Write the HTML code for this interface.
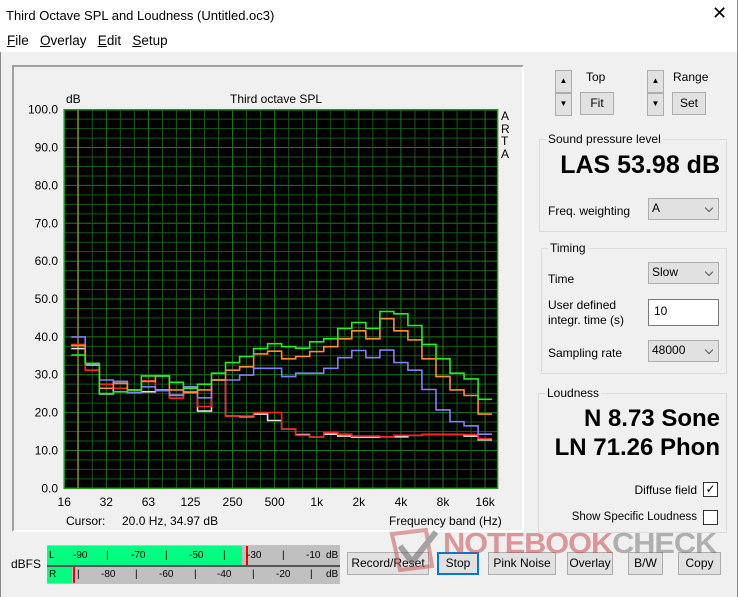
<!DOCTYPE html>
<html><head><meta charset="utf-8"><style>
*{margin:0;padding:0;box-sizing:border-box}
body{width:738px;height:597px;background:#f0f0f0;font-family:"Liberation Sans",Arial,sans-serif;font-size:12px;color:#000;position:relative;overflow:hidden}
.a{position:absolute;white-space:nowrap}
.btn{position:absolute;background:#e1e1e1;border:1px solid #adadad;text-align:center;font-size:12px}
.grp{position:absolute;border:1px solid #dcdcdc}
.grp>span{position:absolute;top:-8px;left:6px;background:#f0f0f0;padding:0 2px}
.cb{position:absolute;background:#e1e1e1;border:1px solid #adadad;padding:2px 0 0 3px;font-size:12px}
.cb:after{content:"";position:absolute;right:6px;top:6px;width:5px;height:5px;border-right:1px solid #555;border-bottom:1px solid #555;transform:rotate(45deg)}
</style></head><body>
<div class="a" style="left:0;top:0;width:738px;height:52px;background:#fff"></div>
<div class="a" style="left:6px;top:8px;font-size:13px">Third Octave SPL and Loudness (Untitled.oc3)</div>
<div class="a" style="left:712px;top:3px;font-size:18px;font-weight:300">✕</div>
<div class="a" style="left:7px;top:33px;font-size:13.5px"><u>F</u>ile&nbsp;&nbsp; <u>O</u>verlay&nbsp;&nbsp; <u>E</u>dit&nbsp;&nbsp; <u>S</u>etup</div>
<div class="a" style="left:0;top:52px;width:1px;height:545px;background:#888"></div>
<div class="a" style="left:737px;top:0;width:1px;height:597px;background:#888"></div>
<div class="a" style="left:12px;top:65px;width:512px;height:467px;border:2px solid #a0a0a0;border-right-color:#fff;border-bottom-color:#fff"></div>
<svg class="a" style="left:0;top:0" width="738" height="597" id="g"></svg>
<div class="a" style="left:66px;top:92px;font-size:12px">dB</div>
<div class="a" style="left:230px;top:92px;font-size:12px">Third octave SPL</div>
<div class="a" style="left:501px;top:110px;font-size:12px;line-height:12.5px;width:10px">A<br>R<br>T<br>A</div>
<div class="a" style="left:66px;top:514px">Cursor:&nbsp;&nbsp;&nbsp;&nbsp; 20.0 Hz, 34.97 dB</div>
<div class="a" style="left:389px;top:514px">Frequency band (Hz)</div>
<!-- right panel -->
<div class="btn" style="left:555px;top:70px;width:17px;height:23px;font-size:8px;line-height:20px">▲</div>
<div class="btn" style="left:555px;top:93px;width:17px;height:23px;font-size:8px;line-height:20px">▼</div>
<div class="a" style="left:586px;top:70px">Top</div>
<div class="btn" style="left:580px;top:92px;width:34px;height:23px;line-height:21px">Fit</div>
<div class="btn" style="left:647px;top:70px;width:17px;height:23px;font-size:8px;line-height:20px">▲</div>
<div class="btn" style="left:647px;top:93px;width:17px;height:23px;font-size:8px;line-height:20px">▼</div>
<div class="a" style="left:673px;top:70px">Range</div>
<div class="btn" style="left:672px;top:92px;width:34px;height:23px;line-height:21px">Set</div>
<div class="grp" style="left:539px;top:139px;width:188px;height:93px"><span>Sound pressure level</span></div>
<div class="a" style="left:540px;top:151px;width:180px;text-align:right;font-size:25px;font-weight:bold">LAS 53.98 dB</div>
<div class="a" style="left:548px;top:204px">Freq. weighting</div>
<div class="cb" style="left:648px;top:198px;width:71px;height:22px">A</div>
<div class="grp" style="left:541px;top:248px;width:186px;height:126px"><span>Timing</span></div>
<div class="a" style="left:548px;top:272px">Time</div>
<div class="cb" style="left:648px;top:262px;width:71px;height:22px">Slow</div>
<div class="a" style="left:548px;top:298px;line-height:15px">User defined<br>integr. time (s)</div>
<div class="a" style="left:648px;top:299px;width:71px;height:27px;background:#fff;border:1px solid #7a7a7a;padding:4px 0 0 5px">10</div>
<div class="a" style="left:548px;top:346px">Sampling rate</div>
<div class="cb" style="left:648px;top:340px;width:71px;height:22px">48000</div>
<div class="grp" style="left:538px;top:393px;width:189px;height:140px"><span>Loudness</span></div>
<div class="a" style="left:530px;top:404px;width:190px;text-align:right;font-size:24px;font-weight:bold;line-height:29px">N 8.73 Sone<br>LN 71.26 Phon</div>
<div class="a" style="left:600px;top:483px;width:97px;text-align:right">Diffuse field</div>
<div class="a" style="left:703px;top:482px;width:15px;height:15px;border:1px solid #333;background:#fff;font-size:12px;line-height:13px;text-align:center">✓</div>
<div class="a" style="left:560px;top:511px;width:137px;text-align:right;font-size:11.5px">Show Specific Loudness</div>
<div class="a" style="left:703px;top:510px;width:15px;height:15px;border:1px solid #333;background:#fff"></div>
<!-- meter -->
<div class="a" style="left:11px;top:557px">dBFS</div>
<div class="a" style="left:47px;top:545px;width:293px;height:39px;background:#c0c0c0"></div>
<div class="a" style="left:47px;top:546px;width:195px;height:19px;background:#00ff80"></div>
<div class="a" style="left:47px;top:567px;width:25px;height:16px;background:#00ff80"></div>
<div class="a" style="left:47px;top:565px;width:293px;height:2px;background:#555"></div>
<div class="a" style="left:246px;top:546px;width:2px;height:19px;background:#e00"></div>
<div class="a" style="left:73px;top:567px;width:2px;height:16px;background:#e00"></div>
<div class="a" style="left:49px;top:550px;font-size:10px;width:291px;height:14px">
<span class="a" style="left:0">L</span><span class="a" style="left:24px">-90</span><span class="a" style="left:57px">|</span><span class="a" style="left:82px">-70</span><span class="a" style="left:116px">|</span><span class="a" style="left:140px">-50</span><span class="a" style="left:174px">|</span><span class="a" style="left:198px">-30</span><span class="a" style="left:233px">|</span><span class="a" style="left:257px">-10</span><span class="a" style="left:277px">dB</span></div>
<div class="a" style="left:49px;top:569px;font-size:10px;width:291px;height:14px">
<span class="a" style="left:0">R</span><span class="a" style="left:28px">|</span><span class="a" style="left:52px">-80</span><span class="a" style="left:86px">|</span><span class="a" style="left:110px">-60</span><span class="a" style="left:145px">|</span><span class="a" style="left:168px">-40</span><span class="a" style="left:203px">|</span><span class="a" style="left:227px">-20</span><span class="a" style="left:261px">|</span><span class="a" style="left:277px">dB</span></div>
<div class="btn" style="left:347px;top:552px;width:82px;height:23px;line-height:21px">Record/Reset</div>
<div class="btn" style="left:437px;top:552px;width:42px;height:23px;line-height:19px;border:2px solid #0078d7">Stop</div>
<div class="btn" style="left:488px;top:552px;width:68px;height:23px;line-height:21px">Pink Noise</div>
<div class="btn" style="left:567px;top:552px;width:46px;height:23px;line-height:21px">Overlay</div>
<div class="btn" style="left:628px;top:552px;width:35px;height:23px;line-height:21px">B/W</div>
<div class="btn" style="left:678px;top:552px;width:43px;height:23px;line-height:21px">Copy</div>
<svg class="a" style="left:388px;top:526px;opacity:.55" width="60" height="50"><path d="M4 8 L38 4 L44 40 L12 44 Z" fill="none" stroke="#c85a5a" stroke-width="4"/><path d="M12 20 L24 36 L48 6" fill="none" stroke="#666" stroke-width="6"/></svg>
<div class="a" style="left:443px;top:528px;font-size:29px;font-weight:bold;letter-spacing:-1px;transform:scaleX(1.06);transform-origin:left;opacity:.5"><span style="color:#c84040">NOTEBOOK</span><span style="color:#707070">CHECK</span></div>
<script>
var s=document.getElementById('g'),h='';
var L=64.2,R=497.6,T=109.7,B=488.3,th=14.03;
function Y(d){return B-(d/100)*(B-T)}
h+='<rect x="'+L+'" y="'+T+'" width="'+(R-L)+'" height="'+(B-T)+'" fill="#000"/>';
for(var i=0;i<=40;i++){var y=Y(i*2.5);h+='<line x1="'+L+'" x2="'+R+'" y1="'+y+'" y2="'+y+'" stroke="'+(i%4==0?'#1c7a1c':'#145a14')+'" stroke-width="1"/>';}
for(var i=0;i<=31;i++){var x=L+th*i;if(x>R)break;h+='<line x1="'+x+'" x2="'+x+'" y1="'+T+'" y2="'+B+'" stroke="'+(i%3==0?'#1c7a1c':'#145a14')+'" stroke-width="1"/>';}
h+='<rect x="'+L+'" y="'+T+'" width="'+(R-L)+'" height="'+(B-T)+'" fill="none" stroke="#1c9a1c" stroke-width="1.5"/>';
h+='<line x1="78" x2="78" y1="'+T+'" y2="'+B+'" stroke="#8a8a20" stroke-width="1.5"/>';
var D={
w:[36.9,32.6,24.9,28.2,25.3,25.5,26,24.6,25.3,20.4,28.6,19.1,18.9,19.6,17.9,15.6,14.2,13.5,14.3,13.8,13.5,13.5,13.6,13.6,14,14.2,14.2,14.2,13.8,12.8],
r:[38,31.2,27.5,26.4,26,28.4,25.8,23.8,25.5,21.6,28.6,19.1,19.1,20,20,15.6,14,13.5,14.7,14.3,13.8,13.8,13.6,14,14,14.2,14.2,14.2,14.2,13.1],
b:[40,32.8,28.6,28.2,25.3,26.8,25.8,24.5,26.8,23.9,28.6,28.6,29.9,31.7,31.7,29.5,30.4,30.4,31.7,34.5,36.4,34.5,36.5,33.2,31.2,26.1,20.7,17.6,16.5,14.3],
o:[37.7,33,26.4,27.7,26,28.2,29.7,26,25.4,26,28.6,31.2,32.1,35.5,36.2,34.2,34.8,36.1,37.4,39.5,41.6,39.5,44.8,41.6,39.2,34.2,29.5,26,24.5,19.6],
g:[35.2,33,25,25.5,26,29.7,29.7,28,26.4,27.5,30.4,33.2,34.8,36.9,38.2,37.4,37,38.7,39.5,42.2,43.8,42.2,46.7,46.1,43,38,34.2,30.4,28.9,23.5]};
var C={w:'#e0e0e0',r:'#ff2020',b:'#8080ff',o:'#ff8c30',g:'#20f020'};
['w','r','b','o','g'].forEach(function(k){var v=D[k],p='';for(var i=0;i<v.length;i++){var c=L+th*(i+1),y=Y(v[i]).toFixed(1);p+=(i?'L':'M')+(c-7).toFixed(1)+' '+y+'L'+(c+7).toFixed(1)+' '+y;}h+='<path d="'+p+'" fill="none" stroke="'+C[k]+'" stroke-width="1.6"/>';});
for(var i=0;i<=10;i++){h+='<text x="58" y="'+(Y(i*10)+4)+'" text-anchor="end" font-size="12" font-family="Liberation Sans,sans-serif">'+(i*10).toFixed(1)+'</text>';}
['16','32','63','125','250','500','1k','2k','4k','8k','16k'].forEach(function(t,i){h+='<text x="'+(L+th*3*i)+'" y="506" text-anchor="middle" font-size="12" font-family="Liberation Sans,sans-serif">'+t+'</text>';});
s.innerHTML=h;
</script>
</body></html>
